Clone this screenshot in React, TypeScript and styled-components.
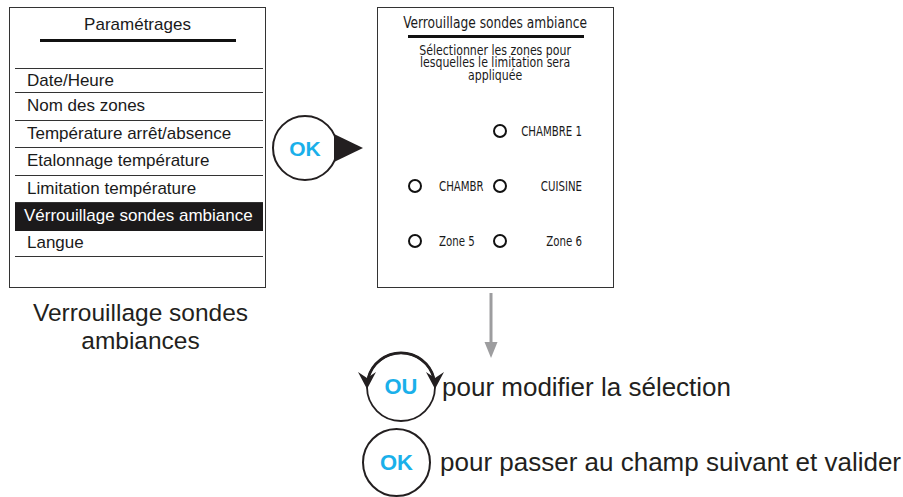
import styled, { createGlobalStyle } from 'styled-components';

const GlobalStyle = createGlobalStyle`
  html, body {
    margin: 0;
    padding: 0;
    background: #ffffff;
  }
  body {
    font-family: "Liberation Sans", Arial, sans-serif;
    color: #231f20;
  }
`;

const Page = styled.div`
  display: flex;
  align-items: flex-start;
  width: 903px;
  height: 497px;
  padding: 7px 0 0 9px;
  box-sizing: border-box;
  overflow: hidden;
`;

const LeftCol = styled.div`
  display: flex;
  flex-direction: column;
  width: 257px;
`;

const MenuPanel = styled.div`
  height: 281px;
  box-sizing: border-box;
  border: 1.5px solid #333;
  background: #fff;
  display: flex;
  flex-direction: column;
`;

const MenuTitle = styled.div`
  text-align: center;
  font-size: 17px;
  line-height: 20px;
  padding-top: 7px;
  color: #1a1a1a;
`;

const TitleRule = styled.div`
  width: 196px;
  height: 3px;
  background: #111;
  margin: 4px auto 0;
`;

const MenuList = styled.ul`
  list-style: none;
  margin: 26px 2px 0 5px;
  padding: 0;
  border-top: 1.5px solid #333;
`;

const MenuItem = styled.li<{ $active?: boolean }>`
  height: 27.5px;
  box-sizing: border-box;
  display: flex;
  align-items: center;
  padding-left: ${({ $active }) => ($active ? '9px' : '12px')};
  font-size: 17px;
  white-space: nowrap;
  color: ${({ $active }) => ($active ? '#fff' : '#1a1a1a')};
  background: ${({ $active }) => ($active ? '#1c1a1b' : 'transparent')};
  border-bottom: 1.5px solid ${({ $active }) => ($active ? '#1c1a1b' : '#333')};

  &:first-child {
    height: 24px;
  }
  &:last-child {
    height: 26px;
  }
`;

const Caption = styled.div`
  margin-top: 11px;
  text-align: center;
  font-size: 24.5px;
  line-height: 28px;
  padding-left: 6px;
`;

const RightCol = styled.div`
  display: flex;
  flex-direction: column;
  margin-left: 6px;
`;

const TopRow = styled.div`
  display: flex;
  align-items: flex-start;
`;

const OkPointer = styled.div`
  display: flex;
  align-items: center;
  margin-top: 108px;
`;

const RoundKey = styled.div<{ $size: number }>`
  width: ${({ $size }) => $size}px;
  height: ${({ $size }) => $size}px;
  box-sizing: border-box;
  border: 2.5px solid #231f20;
  border-radius: 50%;
  display: flex;
  align-items: center;
  justify-content: center;
  background: #fff;
  flex-shrink: 0;
`;

const KeyLabel = styled.span<{ $size?: number }>`
  font-family: "Liberation Sans", Arial, sans-serif;
  font-weight: 700;
  font-size: ${({ $size }) => $size ?? 21}px;
  color: #1ab0ea;
  line-height: 1;
`;

const Pointer = styled.div`
  width: 0;
  height: 0;
  border-top: 14px solid transparent;
  border-bottom: 14px solid transparent;
  border-left: 29px solid #231f20;
  margin-left: -4px;
`;

const ScreenPanel = styled.div`
  width: 237px;
  height: 281px;
  box-sizing: border-box;
  margin-left: 14px;
  border: 1.5px solid #333;
  background: #fff;
  display: flex;
  flex-direction: column;
  align-items: center;
  font-family: "DejaVu Sans Condensed", "DejaVu Sans", sans-serif;
  font-stretch: condensed;
  color: #1a1a1a;
`;

const ScreenTitle = styled.div`
  font-size: 16px;
  line-height: 18px;
  margin-top: 6px;
  white-space: nowrap;
  transform: scaleX(0.85);
`;

const ScreenRule = styled.div`
  width: 176px;
  height: 2.5px;
  background: #111;
  margin-top: 3px;
`;

const ScreenHint = styled.div`
  font-size: 14px;
  line-height: 12.5px;
  text-align: center;
  margin-top: 6px;
  white-space: nowrap;
  transform: scaleX(0.87);
`;

const ZoneGrid = styled.div`
  align-self: stretch;
  display: grid;
  grid-template-columns: 85px 89px;
  grid-auto-rows: 55px;
  padding-left: 30px;
  margin-top: 22px;
`;

const ZoneCell = styled.div<{ $col: number; $row: number }>`
  grid-column: ${({ $col }) => $col};
  grid-row: ${({ $row }) => $row};
  display: flex;
  align-items: center;
`;

const Radio = styled.span`
  width: 14px;
  height: 14px;
  box-sizing: border-box;
  border: 2.3px solid #111;
  border-radius: 50%;
  flex-shrink: 0;
`;

const ZoneName = styled.span<{ $right?: boolean }>`
  font-size: 13.5px;
  white-space: nowrap;
  overflow: hidden;
  ${({ $right }) =>
    $right
      ? 'flex: 1; text-align: right; transform: scaleX(0.84); transform-origin: right center;'
      : 'width: 53px; flex-shrink: 0; margin-left: 17px; transform: scaleX(0.84); transform-origin: left center;'}
`;

const DownArrow = styled.svg`
  margin: 5px 0 0 212px;
  display: block;
`;

const Steps = styled.div`
  display: flex;
  flex-direction: column;
  gap: 5px;
  margin: -7px 0 0 90px;
`;

const Step = styled.div`
  display: flex;
  align-items: center;
  white-space: nowrap;
`;

const CycleKey = styled.div`
  position: relative;
  width: 76px;
  height: 72px;
  margin-left: 1px;
  display: flex;
  align-items: center;
  justify-content: center;
  flex-shrink: 0;

  svg {
    position: absolute;
    inset: 0;
    overflow: visible;
  }
`;

const StepText = styled.span<{ $gap: number }>`
  font-size: 26px;
  margin-left: ${({ $gap }) => $gap}px;
  color: #231f20;
`;

const zones = [
  { name: 'CHAMBRE 1', col: 2, row: 1 },
  { name: 'CHAMBRE 2', col: 1, row: 2 },
  { name: 'CUISINE', col: 2, row: 2 },
  { name: 'Zone 5', col: 1, row: 3 },
  { name: 'Zone 6', col: 2, row: 3 },
];

const menu = [
  'Date/Heure',
  'Nom des zones',
  'Température arrêt/absence',
  'Etalonnage température',
  'Limitation température',
  'Vérrouillage sondes ambiance',
  'Langue',
];

export default function App() {
  return (
    <>
      <GlobalStyle />
      <Page>
        <LeftCol>
          <MenuPanel>
            <MenuTitle>Paramétrages</MenuTitle>
            <TitleRule />
            <MenuList>
              {menu.map((item, i) => (
                <MenuItem key={item} $active={i === 5}>
                  {item}
                </MenuItem>
              ))}
            </MenuList>
          </MenuPanel>
          <Caption>
            Verrouillage sondes
            <br />
            ambiances
          </Caption>
        </LeftCol>

        <RightCol>
          <TopRow>
            <OkPointer>
              <RoundKey $size={66}>
                <KeyLabel>OK</KeyLabel>
              </RoundKey>
              <Pointer />
            </OkPointer>

            <ScreenPanel>
              <ScreenTitle>Verrouillage sondes ambiance</ScreenTitle>
              <ScreenRule />
              <ScreenHint>
                Sélectionner les zones pour
                <br />
                lesquelles le limitation sera
                <br />
                appliquée
              </ScreenHint>
              <ZoneGrid>
                {zones.map((z) => (
                  <ZoneCell key={z.name} $col={z.col} $row={z.row}>
                    <Radio />
                    <ZoneName $right={z.col === 2}>{z.name}</ZoneName>
                  </ZoneCell>
                ))}
              </ZoneGrid>
            </ScreenPanel>
          </TopRow>

          <DownArrow width="14" height="65" viewBox="0 0 14 65">
            <line x1="7" y1="0" x2="7" y2="52" stroke="#9d9d9f" strokeWidth="3" />
            <polygon points="0.5,49 13.5,49 7,65" fill="#9d9d9f" />
          </DownArrow>

          <Steps>
            <Step>
              <CycleKey>
                <svg width="76" height="72" viewBox="0 0 76 72">
                  <circle cx="38" cy="36" r="34" fill="none" stroke="#231f20" strokeWidth="1.8" />
                  <path d="M5.2 27 A34 34 0 0 1 70.8 27" fill="none" stroke="#231f20" strokeWidth="2.8" />
                  <path d="M-5 21 L4 38 L13 21 L4 27 Z" fill="#231f20" />
                  <path d="M63 21 L72 38 L81 21 L72 27 Z" fill="#231f20" />
                </svg>
                <KeyLabel $size={22}>OU</KeyLabel>
              </CycleKey>
              <StepText $gap={3}>pour modifier la sélection</StepText>
            </Step>
            <Step>
              <RoundKey $size={69}>
                <KeyLabel $size={22}>OK</KeyLabel>
              </RoundKey>
              <StepText $gap={9}>pour passer au champ suivant et valider</StepText>
            </Step>
          </Steps>
        </RightCol>
      </Page>
    </>
  );
}
